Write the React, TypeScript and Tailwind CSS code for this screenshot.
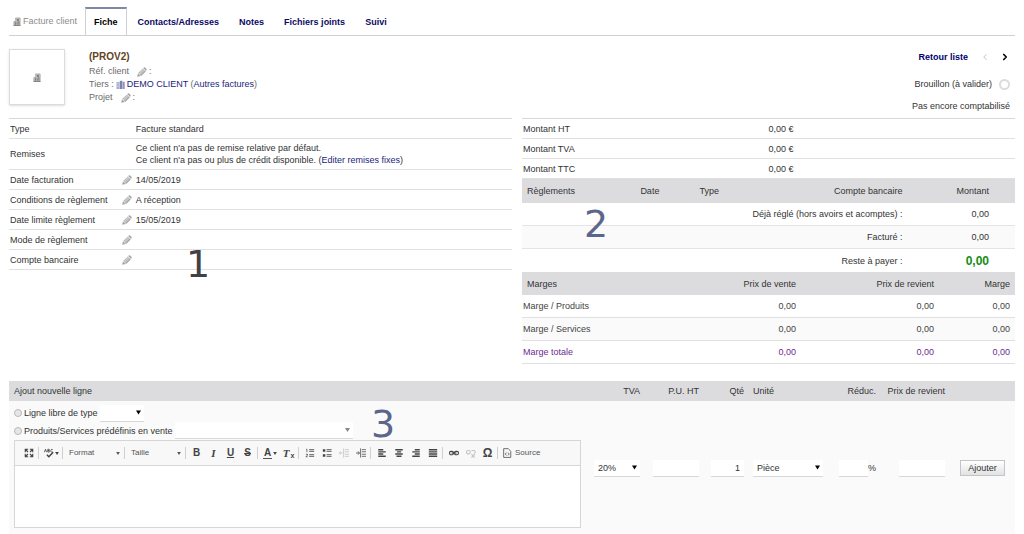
import { ReactNode, useState } from "react";
import { ChevronLeft, ChevronRight } from "lucide-react";
import clsx from "clsx";

/* ---------- icons ---------- */

function BillIcon({ className }: { className?: string }) {
  return (
    <svg viewBox="0 0 9 10" className={clsx("w-[8px] h-[9px] shrink-0", className)} fill="none">
      <path d="M3 1h5v8.5H1V5h2z" fill="#d6d6d6" stroke="#8b8b8b" strokeWidth="0.7" />
      <path d="M4.2 2.6h2.6M4.2 4h2.6" stroke="#55504c" strokeWidth="0.8" />
      <path d="M2.6 5.8v3M4.6 5.2v3.6M6.6 4.6v4.2" stroke="#6b5a4e" strokeWidth="1" />
      <path d="M0.5 9.5h8" stroke="#777" strokeWidth="0.8" />
    </svg>
  );
}

function CompanyIcon() {
  return (
    <svg viewBox="0 0 9 9" className="w-[9px] h-[9px] shrink-0">
      <path d="M0.5 2h3v7h-3z" fill="#a9adcb" />
      <path d="M3.8 0.8h2.6V9H3.8z" fill="#7d83ae" />
      <path d="M6.7 1.8h2V9h-2z" fill="#8f94ba" />
      <path d="M1.2 3.4h1.6M1.2 5h1.6M1.2 6.6h1.6" stroke="#d8daea" strokeWidth="0.6" />
    </svg>
  );
}

function PencilIcon() {
  return (
    <svg viewBox="0 0 10 10" className="w-[10px] h-[10px] shrink-0">
      <path d="M0.2 9.8 0.9 6.4 3.6 9.1z" fill="#a0a0a0" />
      <path d="M1.1 6.1 5.9 1.4 8.7 4.2 3.9 8.9z" fill="#bdbdbd" />
      <path d="M6.3 1 7.1 0.3C7.8-0.2 10.2 2.2 9.7 2.9L9 3.8z" fill="#a4a4a4" />
      <path d="M3.9 8.6 8.5 4.1" stroke="#8f8f8f" strokeWidth="0.8" />
      <path d="M2.3 7 6.9 2.4" stroke="#dcdcdc" strokeWidth="0.7" />
    </svg>
  );
}

function Caret({ className = "w-[5px] h-[4px]" }: { className?: string }) {
  return (
    <svg viewBox="0 0 5 4" className={clsx("shrink-0", className)}>
      <path d="M0 0h5L2.5 4z" fill="currentColor" />
    </svg>
  );
}

function ToolIcon({ children }: { children: ReactNode }) {
  return (
    <svg viewBox="0 0 12 12" className="w-[10px] h-[10px] shrink-0" fill="none" stroke="currentColor" strokeWidth="1.3">
      {children}
    </svg>
  );
}

/* ---------- form parts ---------- */

interface SelectProps {
  label: string;
  options: string[];
  className: string;
  caret?: string;
}

function Select({ label, options, className, caret = "w-[5px] h-[5px] text-black" }: SelectProps) {
  return (
    <span className={clsx("relative inline-flex items-center align-middle", className)}>
      <select aria-label={label} className="appearance-none w-full h-full bg-transparent pl-[4px] outline-none">
        {options.map((o) => (
          <option key={o}>{o}</option>
        ))}
      </select>
      <Caret className={clsx("absolute right-[3px] pointer-events-none", caret)} />
    </span>
  );
}

const field = "h-[17px] bg-white border-b border-[#d8d8d8]";

function TextField({ label, value, className }: { label: string; value?: string; className: string }) {
  return (
    <input
      type="text"
      aria-label={label}
      defaultValue={value}
      className={clsx(field, "px-[4px] text-right outline-none align-middle", className)}
    />
  );
}

function Radio({ id }: { id: string }) {
  return (
    <input
      id={id}
      type="radio"
      name="prod_entry_mode"
      className="appearance-none w-[8px] h-[8px] rounded-full border border-[#b8b8b8] bg-[#e6e6e6] checked:bg-[#666] shrink-0"
    />
  );
}

/* ---------- header ---------- */

const tabs = ["Fiche", "Contacts/Adresses", "Notes", "Fichiers joints", "Suivi"];

function Tabs() {
  const [active, setActive] = useState("Fiche");

  return (
    <nav className="flex items-stretch h-[29px] border-b border-[#d0d0d0]">
      <span className="flex items-center gap-[2px] pl-[4px] pr-[8px] text-[#8c8c8c]">
        <BillIcon />
        Facture client
      </span>
      {tabs.map((t) => (
        <a
          key={t}
          href="#"
          onClick={() => setActive(t)}
          className={clsx(
            "flex items-center px-[8px] mr-[2px] font-bold border-t-2 border-x",
            t === active ? "border-t-[#7f88a6] border-x-[#d0d0d0] text-black" : "border-transparent text-[#0a0a64]"
          )}
        >
          {t}
        </a>
      ))}
    </nav>
  );
}

function Banner() {
  return (
    <header className="flex h-[82px] pt-[13px]">
      <div className="flex items-center justify-center w-[56px] h-[56px] border border-[#dcdcdc] shadow-sm shrink-0">
        <BillIcon />
      </div>
      <div className="ml-[24px] leading-[13px] text-[#6b6b6b]">
        <h1 className="text-[10px] leading-[16px] font-bold text-[#5f4424]">(PROV2)</h1>
        <div className="flex items-center">
          Réf. client
          <button aria-label="Modifier réf. client" className="ml-[8px] mr-[2px]"><PencilIcon /></button>:
        </div>
        <div className="flex items-center gap-[2px]">
          Tiers :
          <CompanyIcon />
          <span>
            <a href="#" className="text-[#1c1c7c]">DEMO CLIENT</a> (<a href="#" className="text-[#1c1c7c]">Autres factures</a>)
          </span>
        </div>
        <div className="flex items-center">
          Projet
          <button aria-label="Modifier projet" className="ml-[8px] mr-[2px]"><PencilIcon /></button>:
        </div>
      </div>
      <div className="ml-auto pr-[5px] flex flex-col items-end text-[#333]">
        <div className="flex items-center h-[16px]">
          <a href="#" className="font-bold text-[#00006e] mr-[12px]">Retour liste</a>
          <ChevronLeft size={10} className="text-[#b8b8b8] mr-[10px]" />
          <a href="#" aria-label="Suivant"><ChevronRight size={10} strokeWidth={4} className="text-black" /></a>
        </div>
        <div className="flex items-center gap-[7px] h-[22px] mt-[8px]">
          Brouillon (à valider)
          <span className="w-[11px] h-[11px] rounded-full border-2 border-[#dcdcdc]" />
        </div>
        <div className="h-[22px] flex items-center">Pas encore comptabilisé</div>
      </div>
    </header>
  );
}

/* ---------- left column ---------- */

interface Detail {
  label: string;
  value?: ReactNode;
  editable?: boolean;
}

const details: Detail[] = [
  { label: "Type", value: "Facture standard" },
  {
    label: "Remises",
    value: (
      <>
        Ce client n'a pas de remise relative par défaut.
        <br />
        Ce client n'a pas ou plus de crédit disponible. (<a href="#" className="text-[#1c1c7c]">Editer remises fixes</a>)
      </>
    ),
  },
  { label: "Date facturation", value: "14/05/2019", editable: true },
  { label: "Conditions de règlement", value: "A réception", editable: true },
  { label: "Date limite règlement", value: "15/05/2019", editable: true },
  { label: "Mode de règlement", editable: true },
  { label: "Compte bancaire", editable: true },
];

const plainTable = "w-full table-fixed border-separate border-spacing-0";

function Details() {
  return (
    <div className="w-1/2 relative">
      <table className={clsx(plainTable, "border-t border-[#d8d8d8] leading-[12px]")}>
        <tbody>
          {details.map((d) => (
            <tr key={d.label} className={d.label === "Remises" ? "h-[31px]" : "h-5"}>
              <th className="w-1/4 border-b border-[#e0e0e0] p-0 pl-px pr-[3px] font-normal">
                <div className="flex items-center justify-between whitespace-nowrap">
                  {d.label}
                  {d.editable && <button aria-label={`Modifier ${d.label}`}><PencilIcon /></button>}
                </div>
              </th>
              <td className="border-b border-[#e0e0e0] p-0 pl-px">{d.value}</td>
            </tr>
          ))}
        </tbody>
      </table>
      <Marker className="left-[177px] top-[127px] text-[#404045]">1</Marker>
    </div>
  );
}

function Marker({ className, children }: { className: string; children: ReactNode }) {
  return (
    <span className={clsx("absolute pointer-events-none font-['DejaVu_Sans',sans-serif] text-[38px] leading-none", className)}>
      {children}
    </span>
  );
}

/* ---------- right column ---------- */

const margins = [
  { label: "Marge / Produits", className: "text-[#444]" },
  { label: "Marge / Services", className: "text-[#444] bg-[#fafafa]" },
  { label: "Marge totale", className: "text-[#6b2c91]" },
];

const headRow = "bg-[#dcdcdf] text-[#333]";

function Totals() {
  return (
    <div className="w-1/2 pl-2.5 relative">
      <table className={clsx(plainTable, "border-t border-[#d8d8d8]")}>
        <tbody>
          {["Montant HT", "Montant TVA", "Montant TTC"].map((m) => (
            <tr key={m} className="h-5">
              <th className="w-1/2 border-b border-[#e0e0e0] p-0 pl-px font-normal text-left">{m}</th>
              <td className="border-b border-[#e0e0e0] p-0">0,00 €</td>
            </tr>
          ))}
        </tbody>
      </table>

      <table className={plainTable}>
        <thead>
          <tr className={clsx(headRow, "h-6")}>
            <th className="w-[23%] p-0 pl-[5px] font-normal text-left">Règlements</th>
            <th className="w-[12%] p-0 pl-[5px] font-normal text-left">Date</th>
            <th className="p-0 pl-[5px] font-normal text-left">Type</th>
            <th className="w-[27%] p-0 pr-[4px] font-normal text-right">Compte bancaire</th>
            <th className="w-[22%] p-0 pr-[26px] font-normal text-right">Montant</th>
          </tr>
        </thead>
        <tbody className="text-right">
          <tr className="h-[23px]">
            <td colSpan={4} className="border-b border-[#e4e4e4] p-0 pr-[4px]">Déjà réglé (hors avoirs et acomptes) :</td>
            <td className="border-b border-[#e4e4e4] p-0 pr-[26px]">0,00</td>
          </tr>
          <tr className="h-[23px] bg-[#fafafa]">
            <td colSpan={4} className="border-b border-[#e4e4e4] p-0 pr-[4px]">Facturé :</td>
            <td className="border-b border-[#e4e4e4] p-0 pr-[26px]">0,00</td>
          </tr>
          <tr className="h-[23px]">
            <td colSpan={4} className="p-0 pr-[4px]">Reste à payer :</td>
            <td className="p-0 pr-[26px] text-[12px] font-bold text-[#148c14]">0,00</td>
          </tr>
        </tbody>
      </table>

      <table className={clsx(plainTable, "text-right")}>
        <thead>
          <tr className={clsx(headRow, "h-[23px]")}>
            <th className="w-[29%] p-0 pl-[5px] font-normal text-left">Marges</th>
            <th className="w-[27%] p-0 pr-[2px] font-normal">Prix de vente</th>
            <th className="w-[28%] p-0 pr-[2px] font-normal">Prix de revient</th>
            <th className="w-[16%] p-0 pr-[5px] font-normal">Marge</th>
          </tr>
        </thead>
        <tbody>
          {margins.map((m) => (
            <tr key={m.label} className={clsx("h-[23px]", m.className)}>
              <td className="border-b border-[#e0e0e0] p-0 pl-px text-left">{m.label}</td>
              <td className="border-b border-[#e0e0e0] p-0 pr-[2px]">0,00</td>
              <td className="border-b border-[#e0e0e0] p-0 pr-[2px]">0,00</td>
              <td className="border-b border-[#e0e0e0] p-0 pr-[5px]">0,00</td>
            </tr>
          ))}
        </tbody>
      </table>
      <Marker className="left-[72px] top-[87px] text-[#5b668c]">2</Marker>
    </div>
  );
}

/* ---------- editor ---------- */

function Tool({ label, dim, menu, children }: { label: string; dim?: boolean; menu?: boolean; children: ReactNode }) {
  return (
    <button
      aria-label={label}
      title={label}
      disabled={dim}
      className={clsx(
        "flex items-center justify-center gap-px h-[17px] shrink-0",
        menu ? "w-5" : "w-[17px]",
        dim ? "text-[#c4c4c4]" : "text-[#444]"
      )}
    >
      {children}
      {menu && <Caret className="w-[4px] h-[3px]" />}
    </button>
  );
}

function Sep() {
  return <span className="w-px h-[12px] bg-[#cfcfcf] ml-px mr-[2px] shrink-0" />;
}

function Toolbar() {
  return (
    <div className="flex items-center h-[25px] pl-[5px] bg-[#f8f8f8] border-b border-[#d6d6d6] text-[8px] text-[#555] overflow-hidden">
      <Tool label="Agrandir">
        <ToolIcon>
          <path d="M1.5 5V1.5H5M7 1.5h3.5V5M10.5 7v3.5H7M5 10.5H1.5V7M1.5 1.5l3.3 3.3M10.5 1.5 7.2 4.8M10.5 10.5 7.2 7.2M1.5 10.5l3.3-3.3" />
        </ToolIcon>
      </Tool>
      <Sep />
      <Tool label="Orthographe" menu>
        <ToolIcon>
          <path d="M0.5 5 1.8 1.5 3 5M4.6 1.5v3.4h1.2c1.2 0 1.2-1.8 0-1.8H4.6 5.8c1 0 1-1.6 0-1.6zM10.5 2C8.5 1 7.8 2.5 8.2 4c.3 1 1.3 1.2 2.3.7" strokeWidth="1" />
          <path d="m3.5 8 2.3 2.5L11 5" strokeWidth="1.7" />
        </ToolIcon>
      </Tool>
      <Sep />
      <Select label="Format" options={["Format"]} className="w-[58px] h-[17px] shrink-0" caret="w-[4px] h-[3px] text-[#555]" />
      <Sep />
      <Select label="Taille" options={["Taille"]} className="w-[57px] h-[17px] shrink-0" caret="w-[4px] h-[3px] text-[#555]" />
      <Sep />
      <Tool label="Gras"><b className="text-[10px]">B</b></Tool>
      <Tool label="Italique"><i className="text-[11px] font-bold font-['Liberation_Serif',serif]">I</i></Tool>
      <Tool label="Souligné"><u className="text-[10px] font-bold">U</u></Tool>
      <Tool label="Barré"><s className="text-[10px] font-bold">S</s></Tool>
      <Sep />
      <Tool label="Couleur du texte" menu>
        <span className="text-[10px] leading-[10px] font-bold border-b border-[#555] px-px">A</span>
      </Tool>
      <Tool label="Supprimer la mise en forme">
        <i className="text-[11px] font-bold font-['Liberation_Serif',serif]">T</i>
        <span className="text-[7px] font-bold self-end">x</span>
      </Tool>
      <Sep />
      <Tool label="Liste numérotée">
        <ToolIcon>
          <path d="M5 2h6M5 4h6M5 8h6M5 10h6" strokeWidth="1" />
          <path d="M1.3 1.500h1V5M1 7.500h2v1.300L1 10.500h2.200" strokeWidth="0.9" />
        </ToolIcon>
      </Tool>
      <Tool label="Liste à puces">
        <ToolIcon>
          <path d="M5.5 2h6M5.5 4h6M5.5 8h6M5.5 10h6" strokeWidth="1" />
          <path d="M1 3h3M1 9h3" strokeWidth="2.8" />
        </ToolIcon>
      </Tool>
      <Tool label="Diminuer le retrait" dim>
        <ToolIcon>
          <path d="M7 2h5M7 4.5h5M7 7.5h5M7 10h5M5.5 0.5v11M4.5 6H0M2 4 0.5 6 2 8" strokeWidth="1" />
        </ToolIcon>
      </Tool>
      <Tool label="Augmenter le retrait">
        <ToolIcon>
          <path d="M7 2h5M7 4.5h5M7 7.5h5M7 10h5M5.5 0.5v11M0 6h4.5M2.5 4 4 6 2.5 8" strokeWidth="0.9" />
        </ToolIcon>
      </Tool>
      <Sep />
      <Tool label="Aligner à gauche"><ToolIcon><path d="M1.5 2h6M1.5 4.6h9M1.5 7.2h6M1.5 9.8h9" strokeWidth="1.7" /></ToolIcon></Tool>
      <Tool label="Centrer"><ToolIcon><path d="M1.5 2h9M3.5 4.6h5M1.5 7.2h9M3 9.8h6" strokeWidth="1.7" /></ToolIcon></Tool>
      <Tool label="Aligner à droite"><ToolIcon><path d="M4.5 2h6M1.5 4.6h9M4.5 7.2h6M1.5 9.8h9" strokeWidth="1.7" /></ToolIcon></Tool>
      <Tool label="Justifier"><ToolIcon><path d="M1 2h10M1 4.6h10M1 7.2h10M1 9.8h10" strokeWidth="1.7" /></ToolIcon></Tool>
      <Sep />
      <Tool label="Lien">
        <ToolIcon>
          <rect x="0.7" y="4" width="4.6" height="4" rx="1.5" />
          <rect x="6.7" y="4" width="4.6" height="4" rx="1.5" />
          <path d="M3 6h6" />
        </ToolIcon>
      </Tool>
      <Tool label="Supprimer le lien" dim>
        <ToolIcon>
          <rect x="0.7" y="3" width="4.3" height="4" rx="1.5" />
          <path d="M6.5 3H9.500c2 0 2 3 0 4M6.5 7.5l4 4M10.5 7.5l-4 4" />
        </ToolIcon>
      </Tool>
      <Tool label="Caractère spécial"><span className="text-[12px] font-bold">Ω</span></Tool>
      <Sep />
      <button className="flex items-center gap-[3px] px-[2px] h-[17px] shrink-0">
        <ToolIcon>
          <path d="M2 0.8h5.5L10.5 4v7.3H2zM5.3 5.5 4 7.2l1.3 1.700M7.3 5.5l1.3 1.700-1.300 1.700" strokeWidth="1" />
        </ToolIcon>
        Source
      </button>
    </div>
  );
}

function LineForm() {
  return (
    <section className="relative mt-[17px]">
      <table className="w-full table-fixed border-separate border-spacing-0 text-right">
        <thead>
          <tr className={clsx(headRow, "h-5")}>
            <th className="p-0 pl-[5px] font-normal text-left">Ajout nouvelle ligne</th>
            <th className="w-[56px] p-0 pr-[5px] font-normal">TVA</th>
            <th className="w-[59px] p-0 pr-[5px] font-normal">P.U. HT</th>
            <th className="w-[45px] p-0 pr-[5px] font-normal">Qté</th>
            <th className="w-[83px] p-0 pl-[4px] font-normal text-left">Unité</th>
            <th className="w-[49px] p-0 pr-[5px] font-normal">Réduc.</th>
            <th className="w-[69px] p-0 pr-[5px] font-normal">Prix de revient</th>
            <th className="w-[65px] p-0" aria-label="Action" />
          </tr>
        </thead>
        <tbody>
          <tr className="bg-[#fafafa]">
            <td className="p-0 pl-[5px] pr-[8px] pt-[3px] pb-[7px] text-left">
              <div className="flex items-center gap-[2px] h-[18px]">
                <Radio id="free" />
                <label htmlFor="free">Ligne libre de type</label>
                <Select label="Type de ligne" options={[""]} className={clsx(field, "w-[44px]")} />
              </div>
              <div className="flex items-center gap-[2px] h-[17px]">
                <Radio id="predef" />
                <label htmlFor="predef">Produits/Services prédéfinis en vente</label>
                <Select label="Produit ou service" options={[""]} className={clsx(field, "w-[178px]")} caret="w-[5px] h-[4px] text-[#888]" />
              </div>
              <div className="mt-px border border-[#d6d6d6] bg-white">
                <Toolbar />
                <textarea aria-label="Description" className="block w-full h-[61px] resize-none outline-none px-2 py-1" />
              </div>
            </td>
            <td className="p-0 pr-[5px]">
              <Select label="TVA" options={["20%"]} className={clsx(field, "w-[46px]")} />
            </td>
            <td className="p-0 pr-[5px]"><TextField label="P.U. HT" className="w-[46px]" /></td>
            <td className="p-0 pr-[5px]"><TextField label="Qté" value="1" className="w-[33px]" /></td>
            <td className="p-0 pl-[4px] text-left">
              <Select label="Unité" options={["Pièce"]} className={clsx(field, "w-[70px]")} />
            </td>
            <td className="p-0 pr-[5px]">
              <span className="flex items-center justify-end">
                <TextField label="Réduc." className="w-[29px]" />%
              </span>
            </td>
            <td className="p-0 pr-[5px]"><TextField label="Prix de revient" className="w-[46px]" /></td>
            <td className="p-0 px-[10px]">
              <button className="w-full h-4 border border-[#c4c4c4] bg-linear-to-b from-white to-[#e2e2e2] text-[#333]">
                Ajouter
              </button>
            </td>
          </tr>
        </tbody>
      </table>
      <Marker className="left-[362px] top-[24px] text-[#5b668c]">3</Marker>
    </section>
  );
}

export default function App() {
  return (
    <main className="bg-white px-[9px] pt-[7px] font-['Liberation_Sans',Arial,sans-serif] text-[9px] leading-[12px] text-[#333] overflow-hidden">
      <Tabs />
      <Banner />
      <div className="flex items-start">
        <Details />
        <Totals />
      </div>
      <LineForm />
    </main>
  );
}
